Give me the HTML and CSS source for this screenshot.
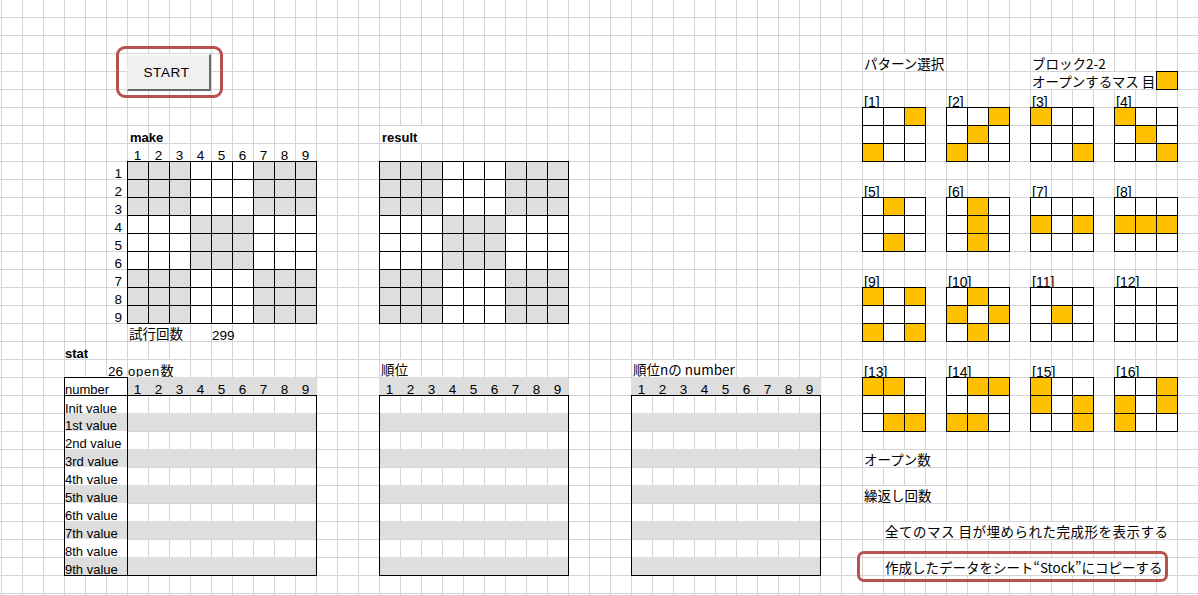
FILE: index.html
```html
<!DOCTYPE html>
<html lang="ja">
<head>
    <meta charset="UTF-8">
    <meta name="viewport" content="width=device-width, initial-scale=1.0">
    <title>Sheet1</title>
    <link rel="stylesheet" href="styles.css">
</head>
<body>
    <div class="sheet">
        <!-- START ボタン -->
        <div class="start-frame"></div>
        <button class="start-btn">START</button>

        <!-- make -->
        <div class="c bold make-title">make</div>
        <div class="c nums make-cols"></div>
        <div class="c rownums make-rows"></div>
        <div class="board make-board"></div>
        <div class="c jp txt tries-label">試行回数</div>
        <div class="c tries-value">299</div>

        <!-- result -->
        <div class="c bold txt result-title">result</div>
        <div class="board result-board"></div>

        <!-- stat -->
        <div class="c bold stat-title">stat</div>
        <div class="c open-count">26</div>
        <div class="c txt open-label">open<span class="kanji">数</span></div>
        <div class="c nums thead t1-head"></div>
        <div class="c num-head">number</div>
        <div class="tbody t1-body labelled"></div>

        <div class="c jp txt t2-title">順位</div>
        <div class="c nums thead t2-head"></div>
        <div class="tbody t2-body"></div>

        <div class="c jp txt t3-title">順位nの number</div>
        <div class="c nums thead t3-head"></div>
        <div class="tbody t3-body"></div>

        <!-- パターン -->
        <div class="c jp txt pattern-title">パターン選択</div>
        <div class="c jp txt block-title">ブロック2-2</div>
        <div class="c jp txt open-title">オープンするマス 目</div>
        <div class="open-key"></div>
        <div class="patterns"></div>

        <div class="c jp txt open-num">オープン数</div>
        <div class="c jp txt repeat-num">繰返し回数</div>
        <div class="c jp txt show-all">全てのマス 目が埋められた完成形を表示する</div>
        <div class="c jp txt copy-text">作成したデータをシート“Stock”にコピーする</div>
        <div class="copy-frame"></div>
    </div>

    <script>
        //列番号 1～9
        for (let el of document.querySelectorAll('.nums')) {
            for (let i = 1; i <= 9; i++) {
                let span = document.createElement('span');
                span.innerHTML = i;
                el.appendChild(span);
            }
        }
        let rows = document.querySelector('.make-rows');
        for (let i = 1; i <= 9; i++) {
            let span = document.createElement('span');
            span.innerHTML = i;
            rows.appendChild(span);
        }

        //make と result の盤面（3x3 ブロックごとに灰色）
        let shade = [1, 0, 1, 0, 1, 0, 1, 0, 1];
        for (let board of document.querySelectorAll('.board')) {
            for (let r = 0; r < 9; r++) {
                for (let c = 0; c < 9; c++) {
                    let cell = document.createElement('div');
                    if (shade[Math.floor(r / 3) * 3 + Math.floor(c / 3)]) {
                        cell.className = 'on';
                    }
                    board.appendChild(cell);
                }
            }
        }

        //stat の表
        let labels = ['Init value', '1st value', '2nd value', '3rd value', '4th value',
            '5th value', '6th value', '7th value', '8th value', '9th value'];
        for (let body of document.querySelectorAll('.tbody')) {
            for (let i = 0; i < 10; i++) {
                let tr = document.createElement('div');
                tr.className = i % 2 == 1 ? 'tr alt' : 'tr';
                if (body.classList.contains('labelled')) {
                    let tl = document.createElement('div');
                    tl.className = 'tl';
                    tl.innerHTML = labels[i];
                    tr.appendChild(tl);
                }
                body.appendChild(tr);
            }
        }

        //パターン [1]～[16]
        let patterns = [
            '001000100', '001010100', '100000001', '100010001',
            '010000010', '010010010', '000101000', '000111000',
            '101000101', '010101010', '000010000', '000000000',
            '110000011', '011000110', '100101001', '001101100'
        ];
        let box = document.querySelector('.patterns');
        patterns.forEach(function (p, i) {
            let pat = document.createElement('div');
            pat.className = 'pat';
            let label = document.createElement('div');
            label.className = 'c pat-label';
            label.innerHTML = '[' + (i + 1) + ']';
            let grid = document.createElement('div');
            grid.className = 'pat-board';
            for (let ch of p) {
                let cell = document.createElement('div');
                if (ch == '1') {
                    cell.className = 'on';
                }
                grid.appendChild(cell);
            }
            pat.appendChild(label);
            pat.appendChild(grid);
            box.appendChild(pat);
        });
    </script>
</body>
</html>
```

FILE: styles.css
```css
* {
    margin: 0;
    padding: 0;
    box-sizing: border-box;
}

body {
    width: 1198px;
    height: 595px;
    overflow: hidden;
    color: #000;
    font-family: "Liberation Sans", "Noto Sans CJK JP", sans-serif;
    font-size: 13px;
    background-color: #fff;
    /* Excel の枠線 */
    background-image:
        linear-gradient(to right, #d4d4d4 1px, transparent 1px),
        linear-gradient(to bottom, #d4d4d4 1px, transparent 1px);
    background-size: 21px 18px;
    background-position: 1px 17px;
}

.sheet {
    display: grid;
    grid-template-columns: repeat(57, 21px);
    grid-template-rows: repeat(34, 18px);
    margin: -1px 0 0 1px;
}

/* セルの文字 */
.c {
    line-height: 18px;
    padding-top: 4px;
    white-space: nowrap;
}

/* 日本語のセル */
.c.jp {
    font-family: "Noto Sans CJK JP", sans-serif;
    font-size: 13.5px;
    padding-top: 1px;
}

.kanji {
    font-family: "Noto Sans CJK JP", sans-serif;
    font-size: 13.5px;
    line-height: 1;
    letter-spacing: 0;
}

.bold {
    font-weight: bold;
}

/* はみ出した文字の下は枠線を消す */
.txt {
    background: linear-gradient(#fff, #fff) no-repeat 1px 1px / 100% 100%;
}

.nums {
    display: grid;
    grid-template-columns: repeat(9, 21px);
    text-align: center;
}

/* START */
.start-frame {
    grid-column: 6 / span 6;
    grid-row: 3 / span 4;
    align-self: start;
    justify-self: start;
    width: 107px;
    height: 52px;
    margin: 11px 0 0 10px;
    border: 3px solid #b9514f;
    border-radius: 9px;
}

.start-btn {
    grid-column: 7 / span 4;
    grid-row: 4 / span 3;
    align-self: start;
    justify-self: start;
    width: 84px;
    height: 37px;
    margin-top: 1px;
    padding-right: 4px;
    background-color: #f0f0f0;
    border: none;
    border-top: 1px solid #fff;
    border-left: 1px solid #e3e3e3;
    border-right: 2px solid #6b6b6b;
    border-bottom: 2px solid #6b6b6b;
    font-family: "Liberation Sans", sans-serif;
    font-size: 13.5px;
    letter-spacing: 0.6px;
    color: #000;
}

/* 9x9 の盤面 */
.board {
    display: grid;
    grid-template-columns: repeat(9, 20px);
    grid-auto-rows: 17px;
    gap: 1px;
    padding: 1px;
    width: 190px;
    height: 163px;
    align-self: start;
    justify-self: start;
    background-color: #000;
}

.board div {
    background-color: #fff;
}

.board div.on {
    background-color: #dedede;
}

.make-title {
    grid-column: 7 / span 2;
    grid-row: 8;
    padding-left: 3px;
}

.make-cols {
    grid-column: 7 / span 9;
    grid-row: 9;
    font-size: 13.5px;
}

.make-rows {
    grid-column: 6;
    grid-row: 10 / span 9;
    display: grid;
    grid-template-rows: repeat(9, 18px);
    padding-top: 0;
    text-align: right;
    font-size: 13.5px;
}

.make-rows span {
    padding: 4px 5px 0 0;
}

.make-board {
    grid-column: 7 / span 9;
    grid-row: 10 / span 9;
}

.tries-label {
    grid-column: 7 / span 3;
    grid-row: 19;
    padding-left: 2px;
}

.tries-value {
    grid-column: 11 / span 2;
    grid-row: 19;
    padding-left: 1px;
    font-size: 13.5px;
}

.result-title {
    grid-column: 19 / span 3;
    grid-row: 8;
    padding-left: 3px;
}

.result-board {
    grid-column: 19 / span 9;
    grid-row: 10 / span 9;
}

/* stat */
.stat-title {
    grid-column: 4 / span 2;
    grid-row: 20;
    padding-left: 1px;
}

.open-count {
    grid-column: 4 / span 3;
    grid-row: 21;
    text-align: right;
    padding-right: 4px;
    font-size: 13.5px;
}

.open-label {
    grid-column: 7 / span 3;
    grid-row: 21;
    padding-left: 1px;
    letter-spacing: 0.8px;
}

.thead {
    grid-row: 22;
    background-color: #dedede;
    font-size: 13.5px;
}

.t1-head {
    grid-column: 7 / span 9;
}

.t2-head {
    grid-column: 19 / span 9;
}

.t3-head {
    grid-column: 31 / span 9;
}

.num-head {
    grid-column: 4 / span 3;
    grid-row: 22;
    align-self: start;
    width: 64px;
    height: 19px;
    padding-top: 3px;
    border: 1px solid #000;
    background-color: #fff;
    line-height: 18px;
}

.tbody {
    grid-row: 23 / span 10;
    align-self: start;
    justify-self: start;
    display: grid;
    grid-template-rows: 17px repeat(9, 18px);
    width: 190px;
    height: 181px;
    border: 1px solid #000;
}

.t1-body {
    grid-column: 4 / span 12;
    width: 253px;
}

.t2-body {
    grid-column: 19 / span 9;
}

.t3-body {
    grid-column: 31 / span 9;
}

.tr {
    display: flex;
}

.tr.alt {
    background-color: #dedede;
}

.tl {
    width: 63px;
    height: 100%;
    padding-top: 4px;
    line-height: 18px;
    border-right: 1px solid #000;
    background-color: #fff;
    white-space: nowrap;
}

.tr.alt .tl {
    background-color: #dedede;
}

.t2-title {
    grid-column: 19 / span 2;
    grid-row: 21;
    padding-left: 2px;
}

.t3-title {
    grid-column: 31 / span 5;
    grid-row: 21;
    padding-left: 2px;
}

/* パターン選択 */
.pattern-title {
    grid-column: 42 / span 4;
    grid-row: 4;
    padding-left: 2px;
}

.block-title {
    grid-column: 50 / span 4;
    grid-row: 4;
    padding-left: 2px;
}

.open-title {
    grid-column: 50 / span 6;
    grid-row: 5;
    padding-left: 2px;
}

.open-key {
    grid-column: 56;
    grid-row: 5;
    align-self: start;
    width: 22px;
    height: 19px;
    border: 1px solid #000;
    background-color: #ffc000;
}

.patterns {
    grid-column: 42 / span 15;
    grid-row: 6 / span 19;
    display: grid;
    grid-template-columns: repeat(4, 63px);
    grid-auto-rows: 72px;
    column-gap: 21px;
    row-gap: 18px;
}

.pat {
    display: grid;
    grid-template-rows: 18px 54px;
}

.pat-label {
    padding-left: 2px;
    font-size: 14px;
}

.pat-board {
    display: grid;
    grid-template-columns: repeat(3, 20px);
    grid-auto-rows: 17px;
    gap: 1px;
    padding: 1px;
    width: 64px;
    height: 55px;
    background-color: #000;
}

.pat-board div {
    background-color: #fff;
}

.pat-board div.on {
    background-color: #ffc000;
}

.open-num {
    grid-column: 42 / span 4;
    grid-row: 26;
    padding-left: 2px;
}

.repeat-num {
    grid-column: 42 / span 4;
    grid-row: 28;
    padding-left: 2px;
}

.show-all {
    grid-column: 43 / span 14;
    grid-row: 30;
    padding-left: 2px;
    letter-spacing: 0.5px;
}

.copy-text {
    grid-column: 43 / span 14;
    grid-row: 32;
    padding-left: 2px;
}

.copy-frame {
    grid-column: 41 / span 16;
    grid-row: 31 / span 3;
    align-self: start;
    justify-self: start;
    width: 311px;
    height: 31px;
    margin: 12px 0 0 16px;
    border: 3px solid #b9514f;
    border-radius: 7px;
}
```
